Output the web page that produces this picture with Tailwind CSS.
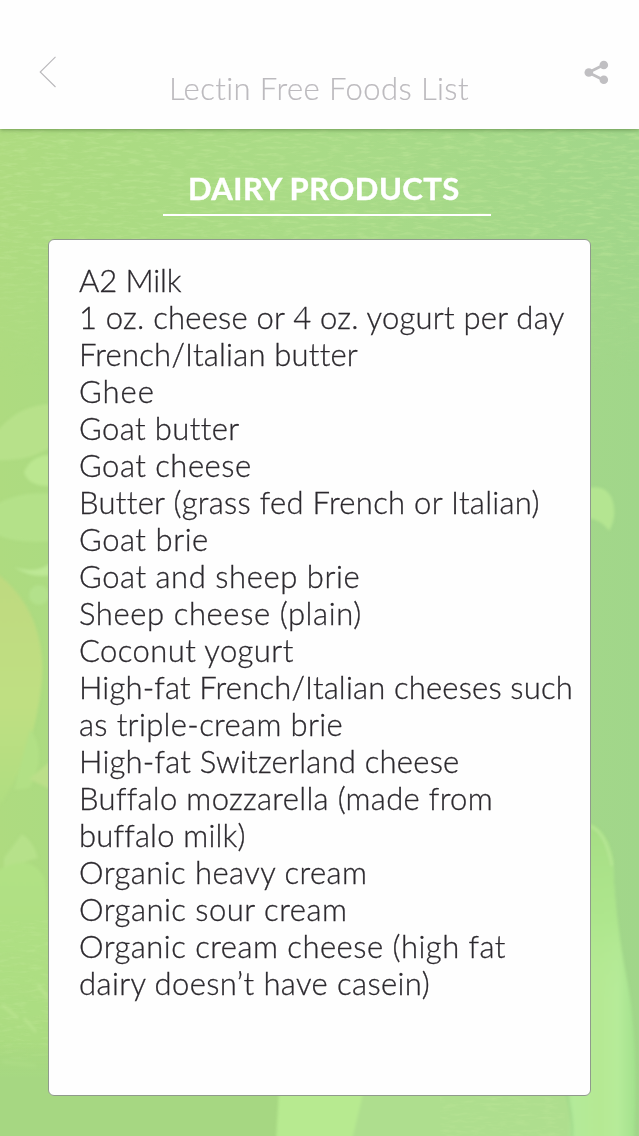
<!DOCTYPE html>
<html lang="en">
<head>
    <meta charset="UTF-8">
    <meta name="viewport" content="width=device-width, initial-scale=1.0">
    <title>Lectin Free Foods List</title>
    <script src="https://cdn.jsdelivr.net/npm/@tailwindcss/browser@4"></script>
</head>
<body class="relative isolate flex h-[1136px] w-[639px] flex-col overflow-hidden bg-[#a9db85] font-['Lato',sans-serif] [font-variant-ligatures:none]">
    <!-- Tinted food photo backdrop -->
    <svg class="absolute inset-0 -z-10" width="639" height="1136" viewBox="0 0 639 1136">
        <defs>
            <linearGradient id="base" x1="0" x2="1" y1="0" y2="0">
                <stop offset="0" stop-color="#aedb80"/>
                <stop offset=".08" stop-color="#acdb81"/>
                <stop offset=".5" stop-color="#a9db87"/>
                <stop offset="1" stop-color="#a1d68a"/>
            </linearGradient>
            <linearGradient id="floor" x1="0" x2="0" y1="0" y2="1">
                <stop offset="0" stop-color="#a6d781" stop-opacity="0"/>
                <stop offset=".4" stop-color="#a6d782"/>
                <stop offset="1" stop-color="#a6d782"/>
            </linearGradient>
            <linearGradient id="bottle" x1="500" x2="639" y1="0" y2="0" gradientUnits="userSpaceOnUse">
                <stop offset=".5" stop-color="#b3ea9a"/>
                <stop offset=".72" stop-color="#b5e993"/>
                <stop offset=".85" stop-color="#b6eb99"/>
                <stop offset="1" stop-color="#9fdf8b"/>
            </linearGradient>
            <linearGradient id="stalk" x1="0" x2="0" y1="0" y2="1">
                <stop offset="0" stop-color="#a6dd84"/>
                <stop offset=".45" stop-color="#ace58b" stop-opacity=".8"/>
                <stop offset=".8" stop-color="#b3e993" stop-opacity="0"/>
            </linearGradient>
            <linearGradient id="fruit" x1="0" x2="0" y1="0" y2="1">
                <stop offset="0" stop-color="#bed97f"/>
                <stop offset=".55" stop-color="#bfdf82"/>
                <stop offset="1" stop-color="#aedd80"/>
            </linearGradient>
            <linearGradient id="leaf" x1="0" x2="0" y1="0" y2="1">
                <stop offset="0" stop-color="#b1e184"/>
                <stop offset="1" stop-color="#a9da80"/>
            </linearGradient>
            <linearGradient id="fade" x1="0" x2="0" y1="0" y2="1">
                <stop offset=".4" stop-color="#fff"/>
                <stop offset="1" stop-color="#000"/>
            </linearGradient>
            <mask id="top"><rect y="129" width="639" height="250" fill="url(#fade)"/></mask>
            <filter id="soft" color-interpolation-filters="sRGB"><feGaussianBlur stdDeviation="1.4"/></filter>
            <filter id="grain" x="0" y="0" width="100%" height="100%" color-interpolation-filters="sRGB">
                <feTurbulence type="fractalNoise" baseFrequency=".07 .3" numOctaves="3" seed="4"/>
                <feColorMatrix values="0 0 0 0 .78  0 0 0 0 .92  0 0 0 0 .62  0 2.4 0 0 -1.1"/>
            </filter>
        </defs>
        <rect width="639" height="1136" fill="url(#base)"/>
        <g mask="url(#top)"><rect y="129" width="639" height="250" filter="url(#grain)" opacity=".45"/></g>
        <g filter="url(#soft)">
            <path d="M-5 434Q18 404 52 404V446Q30 462 -5 460Z" fill="#b7e18a"/>
            <path d="M24 472Q32 454 52 455V486Q28 487 24 472Z" fill="#bbe790"/>
            <path d="M-5 505Q20 490 52 494V541Q20 545 -5 534Z" fill="#b4e189"/>
            <path d="M14 567Q36 575 52 562V575Q32 579 14 567Z" fill="#bde895"/>
            <circle cx="39" cy="595" r="10" fill="#b3e18b"/>
            <path d="M-5 572Q46 610 42 680Q34 760 -5 812Z" fill="url(#fruit)"/>
            <path d="M14 790L30 729Q42 745 38 766L30 788Z" fill="#b2e085"/>
            <path d="M29 779L52 760V790Z" fill="#bbdf89"/>
            <path d="M4 858L22 834Q34 842 38 858Q20 862 4 872Z" fill="#b6e18a"/>
            <path d="M-5 872Q32 850 45 880Q52 940 52 1090H-5Z" fill="url(#leaf)"/>
            <path d="M2 1005L18 1018M24 1018L36 1032M3 1062L36 1066M38 985L48 998" stroke="#c0e896" stroke-width="3" opacity=".6"/>
            <path d="M588 488Q608 484 613 502Q617 518 609 531Q602 520 588 518Z" fill="#b4e591"/>
            <path d="M588 823Q606 828 613 858Q614 910 625 970Q639 1030 634 1140H500L588 1080Z" fill="url(#bottle)"/>
            <path d="M588 823Q606 828 613 858Q614 910 625 970L634 1040H588Z" fill="url(#stalk)"/>
        </g>
        <rect y="920" width="48" height="140" filter="url(#grain)" opacity=".3"/>
        <rect y="1040" width="285" height="96" fill="url(#floor)"/>
        <g filter="url(#soft)">
            <path d="M279 1090H380V1140H276Z" fill="#b7ea90"/>
            <path d="M364 1090H570V1140H352Z" fill="#aede8e"/>
            <path d="M566 1092Q573 1115 572 1138" stroke="#9fd88a" stroke-width="2" fill="none"/>
            <path d="M590 826Q606 832 612 866" stroke="#bbe89a" stroke-width="2" fill="none"/>
        </g>
        <rect x="440" y="1097" width="125" height="39" filter="url(#grain)" opacity=".3"/>
    </svg>

    <header class="relative h-[129px] shrink-0 bg-[#fefefe] shadow-[0_1px_4px_rgba(70,110,50,0.6)]">
        <div class="grid grid-cols-[169px_1fr_55px] items-start pt-[56px]">
            <svg class="ml-[39px]" width="18" height="32" viewBox="0 0 18 32" fill="none" stroke="#b9b8bb" stroke-width="1.1"><path d="M16.5 .8L1.2 16L16.5 31"/></svg>
            <h1 class="mt-[14px] text-[31px] leading-[37px] font-light tracking-[0.42px] whitespace-nowrap text-[#bcbabe] [-webkit-text-stroke:0.2px_#bcbabe]">Lectin Free Foods List</h1>
            <svg class="mt-[4px]" width="25" height="25" viewBox="0 0 25 25" fill="#c0bfc2">
                <path d="M4.5 12.5L19.5 5M4.5 12.5L19.5 20" stroke="#c0bfc2" stroke-width="2.8"/>
                <circle cx="4.8" cy="12.5" r="4.3"/><circle cx="19.8" cy="5" r="4.3"/><circle cx="19.8" cy="19.8" r="4.3"/>
            </svg>
        </div>
    </header>

    <main class="flex flex-1 flex-col px-[48px] pt-[41px]">
        <h2 class="ml-[115px] h-[46px] w-[328px] border-b-2 border-white pl-[25px] text-[31px] leading-[37px] font-bold tracking-[0.46px] whitespace-nowrap text-white [-webkit-text-stroke:0.4px_white]">DAIRY PRODUCTS</h2>
        <ul class="mt-[23px] h-[857px] w-[543px] rounded-[6px] border border-[#8f9a8c] bg-[#fefefe] pt-[21.5px] pl-[30px] text-[31px] leading-[37.05px] font-light whitespace-nowrap text-[#2c292e] [-webkit-text-stroke:0.3px_#2c292e]">
            <li class="tracking-[-0.1px]">A2 Milk</li>
            <li class="tracking-[0.23px]">1 oz. cheese or 4 oz. yogurt per day</li>
            <li class="tracking-[0.22px]">French/Italian butter</li>
            <li class="tracking-[1px]">Ghee</li>
            <li class="tracking-[0.4px]">Goat butter</li>
            <li class="tracking-[0.5px]">Goat cheese</li>
            <li class="tracking-[0.3px]">Butter (grass fed French or Italian)</li>
            <li class="tracking-[0.55px]">Goat brie</li>
            <li class="tracking-[0.56px]">Goat and sheep brie</li>
            <li class="tracking-[0.6px]">Sheep cheese (plain)</li>
            <li class="tracking-[0.42px]">Coconut yogurt</li>
            <li class="tracking-[0.18px]">High-fat French/Italian cheeses such</li>
            <li class="tracking-[0.35px]">as triple-cream brie</li>
            <li class="tracking-[0.23px]">High-fat Switzerland cheese</li>
            <li class="tracking-[0.32px]">Buffalo mozzarella (made from</li>
            <li class="tracking-[0.2px]">buffalo milk)</li>
            <li class="tracking-[0.45px]">Organic heavy cream</li>
            <li class="tracking-[0.5px]">Organic sour cream</li>
            <li class="tracking-[0.48px]">Organic cream cheese (high fat</li>
            <li class="tracking-[0.4px]">dairy doesn’t have casein)</li>
        </ul>
    </main>
</body>
</html>
